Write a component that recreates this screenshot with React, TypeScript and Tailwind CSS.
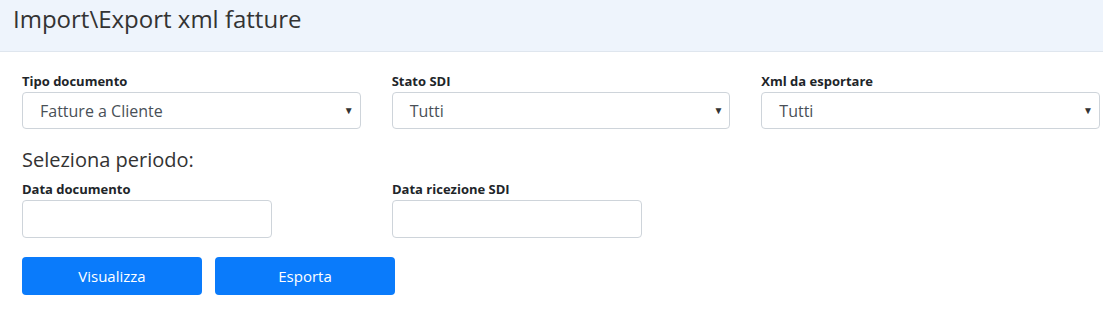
import React from 'react';

const font = { fontFamily: '"Open Sans", "Liberation Sans", sans-serif' };

const SelectField = ({ label, value }: { label: string; value: string }) => (
    <div className="flex flex-col">
        <label className="text-[13px] font-bold text-[#212529] leading-[16px] mb-[3px]">{label}</label>
        <div className="relative h-[37px] border border-[#ced4da] rounded-[4px] bg-white flex items-center pl-[17px]">
            <span className="text-[16px] text-[#495057]">{value}</span>
            <span className="absolute right-[6px] top-[10px] text-[10px] text-[#333]">▼</span>
        </div>
    </div>
);

const DateField = ({ label }: { label: string }) => (
    <div className="flex flex-col w-[250px]">
        <label className="text-[13px] font-bold text-[#212529] leading-[16px] mb-[3px]">{label}</label>
        <input className="h-[38px] border border-[#ced4da] rounded-[4px] bg-white outline-none" />
    </div>
);

const App = (): React.ReactNode => (
    <div className="min-h-screen bg-white" style={font}>
        <header className="h-[52px] bg-[#eef4fc] border-b border-[#dfe6ee] pl-[13px] pt-[2px]">
            <h1 className="text-[24px] text-[#333] leading-[34px]">Import\Export xml fatture</h1>
        </header>
        <main className="pl-[22px] pr-[3px] pt-[21px]">
            <div className="grid grid-cols-3 gap-x-[31px]">
                <SelectField label="Tipo documento" value="Fatture a Cliente" />
                <SelectField label="Stato SDI" value="Tutti" />
                <SelectField label="Xml da esportare" value="Tutti" />
            </div>
            <h2 className="text-[20px] text-[#333] leading-[28px] mt-[17px]">Seleziona periodo:</h2>
            <div className="flex gap-x-[120px] mt-[7px]">
                <DateField label="Data documento" />
                <DateField label="Data ricezione SDI" />
            </div>
            <div className="flex gap-x-[13px] mt-[19px]">
                <button className="w-[180px] h-[38px] rounded-[4px] bg-[#0a7bfb] text-white text-[15px]">Visualizza</button>
                <button className="w-[180px] h-[38px] rounded-[4px] bg-[#0a7bfb] text-white text-[15px]">Esporta</button>
            </div>
        </main>
    </div>
);

export default App;
